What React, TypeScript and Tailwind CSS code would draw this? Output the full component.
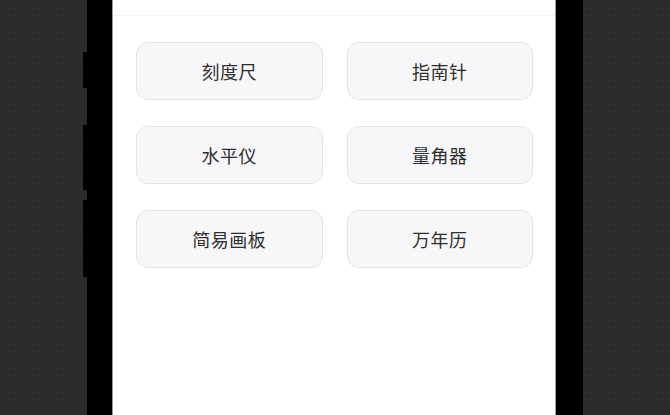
import React from "react";

const tools = ["刻度尺", "指南针", "水平仪", "量角器", "简易画板", "万年历"];

export default function App() {
  return (
    <div className="w-[670px] h-[415px] overflow-hidden flex bg-[#2b2b2b] bg-[radial-gradient(#303030_1px,transparent_1px)] bg-[length:6px_6px]">
      <div className="w-[83px] shrink-0" />
      {/* side buttons */}
      <div className="w-[4px] shrink-0 flex flex-col">
        <div className="h-[52px]" />
        <div className="h-[36px] bg-black" />
        <div className="h-[37px]" />
        <div className="h-[65px] bg-black" />
        <div className="h-[10px]" />
        <div className="h-[77px] bg-black" />
      </div>
      {/* phone body */}
      <div className="w-[496px] h-[415px] shrink-0 bg-black pl-[25px] pr-[27px] flex">
        <div className="flex-1 h-full bg-white border-l border-r border-[#9a9a9a] flex flex-col">
          <div className="h-[16px] border-b border-[#f1f1f3] shrink-0" />
          <div className="grid grid-cols-2 gap-x-[24px] gap-y-[26px] pl-[23px] pr-[22px] pt-[26px]">
            {tools.map((t) => (
              <div
                key={t}
                className="h-[58px] rounded-[12px] bg-[#f7f7f9] border border-[#e4e4e8] flex items-center justify-center text-[18px] font-normal text-[#2e2e2e] tracking-[0.5px]"
                style={{ fontFamily: '"Noto Sans CJK SC", "Noto Sans", sans-serif' }}
              >
                {t}
              </div>
            ))}
          </div>
        </div>
      </div>
    </div>
  );
}
